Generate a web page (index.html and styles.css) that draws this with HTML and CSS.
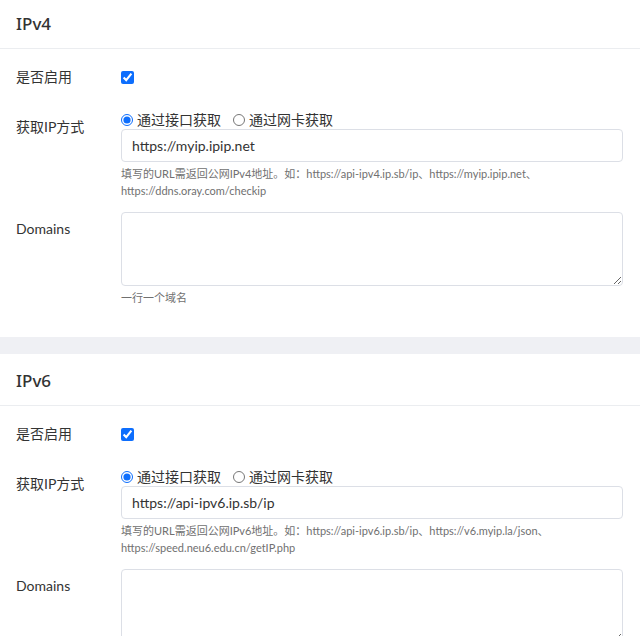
FILE: index.html
```html
<!DOCTYPE html>
<html lang="zh-CN">
<head>
<meta charset="utf-8">
<title>DDNS</title>
<link rel="stylesheet" href="styles.css">
</head>
<body>
<div class="page">
  <section class="card">
    <header class="card-head">IPv4</header>
    <div class="card-body">
      <div class="item item-check">
        <label class="label">是否启用</label>
        <div class="control control-check"><input type="checkbox" checked></div>
      </div>
      <div class="item item-ip">
        <label class="label">获取IP方式</label>
        <div class="control">
          <div class="radios">
            <label class="radio"><input type="radio" name="t4" checked>通过接口获取</label>
            <label class="radio"><input type="radio" name="t4">通过网卡获取</label>
          </div>
          <input class="text" type="text" value="https://myip.ipip.net">
          <div class="help">填写的URL需返回公网IPv4地址。如：https://api-ipv4.ip.sb/ip、https://myip.ipip.net、<br>https://ddns.oray.com/checkip</div>
        </div>
      </div>
      <div class="item">
        <label class="label label-area">Domains</label>
        <div class="control">
          <textarea class="area"></textarea>
          <div class="help">一行一个域名</div>
        </div>
      </div>
    </div>
  </section>
  <section class="card">
    <header class="card-head">IPv6</header>
    <div class="card-body">
      <div class="item item-check">
        <label class="label">是否启用</label>
        <div class="control control-check"><input type="checkbox" checked></div>
      </div>
      <div class="item item-ip">
        <label class="label">获取IP方式</label>
        <div class="control">
          <div class="radios">
            <label class="radio"><input type="radio" name="t6" checked>通过接口获取</label>
            <label class="radio"><input type="radio" name="t6">通过网卡获取</label>
          </div>
          <input class="text" type="text" value="https://api-ipv6.ip.sb/ip">
          <div class="help">填写的URL需返回公网IPv6地址。如：https://api-ipv6.ip.sb/ip、https://v6.myip.la/json、<br>https://speed.neu6.edu.cn/getIP.php</div>
        </div>
      </div>
      <div class="item">
        <label class="label label-area">Domains</label>
        <div class="control">
          <textarea class="area"></textarea>
          <div class="help">一行一个域名</div>
        </div>
      </div>
    </div>
  </section>
</div>
</body>
</html>
```

FILE: styles.css
```css
html, body {
  margin: 0;
  padding: 0;
  background: #eff0f4;
}
body {
  font-family: "Lato", "Noto Sans CJK SC", sans-serif;
  color: #333;
  font-size: 14px;
  overflow: hidden;
}
.page {
  margin-top: -3px;
  display: flex;
  flex-direction: column;
  gap: 17px;
}
.card {
  background: #fff;
}
.card-head {
  height: 51px;
  line-height: 54px;
  padding: 0 16px;
  font-family: "Noto Sans", "Noto Sans CJK SC", sans-serif;
  font-size: 17px;
  font-weight: 500;
  color: #333;
  border-bottom: 1px solid #ebedf0;
}
.card-body {
  padding: 12px 17px 31px 16px;
}
.item {
  display: flex;
}
.item-check {
  margin-bottom: 18px;
}
.item-ip {
  margin-bottom: 13px;
}
.label {
  width: 105px;
  flex: none;
  line-height: 32px;
  color: #333;
}
.label-area {
  padding-top: 1px;
}
.control {
  flex: 1;
  min-width: 0;
}
.control-check {
  height: 32px;
  display: flex;
  align-items: center;
}
.control-check input {
  margin: 0;
  width: 13px;
  height: 13px;
  accent-color: #0d6efd;
}
.radios {
  display: flex;
  gap: 12px;
  line-height: 18px;
  font-size: 14px;
}
.radio {
  display: flex;
  align-items: center;
}
.radio input {
  margin: 0 4px 0 0;
  width: 12px;
  height: 12px;
  accent-color: #0d6efd;
}
.text {
  display: block;
  box-sizing: border-box;
  width: 100%;
  height: 33px;
  margin: 0;
  padding: 0 10px;
  border: 1px solid #dcdfe6;
  border-radius: 4px;
  font-family: "Lato", "Noto Sans CJK SC", sans-serif;
  font-size: 14px;
  color: #333;
  outline: none;
}
.area {
  display: block;
  box-sizing: border-box;
  width: 100%;
  height: 74px;
  margin: 0;
  border: 1px solid #dcdfe6;
  border-radius: 4px;
  resize: vertical;
}
.help {
  margin-top: 3px;
  font-size: 11px;
  line-height: 17px;
  color: #707070;
}
```
